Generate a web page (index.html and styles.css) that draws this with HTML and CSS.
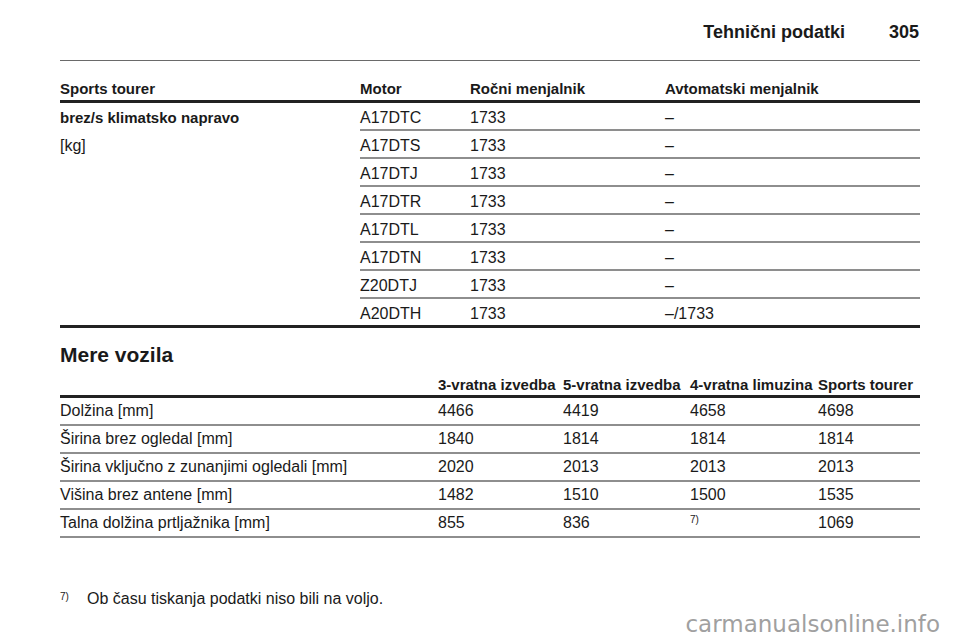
FILE: index.html
```html
<!DOCTYPE html>
<html lang="sl">
<head>
<meta charset="utf-8">
<title>Tehnični podatki 305</title>
<link rel="stylesheet" href="styles.css">
</head>
<body>
<div class="page">
  <header class="page-head">
    <span class="head-title">Tehnični podatki</span>
    <span class="head-num">305</span>
  </header>

  <div class="tbl-wrap">
    <table class="tbl tbl1">
      <colgroup>
        <col class="w300"><col class="w110"><col class="w195"><col class="w255">
      </colgroup>
      <thead>
        <tr><th>Sports tourer</th><th>Motor</th><th>Ročni menjalnik</th><th>Avtomatski menjalnik</th></tr>
      </thead>
      <tbody>
        <tr>
          <td class="lead" rowspan="8"><div class="lead-b">brez/s klimatsko napravo</div><div class="lead-u">[kg]</div></td>
          <td>A17DTC</td><td>1733</td><td>–</td>
        </tr>
        <tr><td>A17DTS</td><td>1733</td><td>–</td></tr>
        <tr><td>A17DTJ</td><td>1733</td><td>–</td></tr>
        <tr><td>A17DTR</td><td>1733</td><td>–</td></tr>
        <tr><td>A17DTL</td><td>1733</td><td>–</td></tr>
        <tr><td>A17DTN</td><td>1733</td><td>–</td></tr>
        <tr><td>Z20DTJ</td><td>1733</td><td>–</td></tr>
        <tr class="last"><td>A20DTH</td><td>1733</td><td>–/1733</td></tr>
      </tbody>
    </table>
  </div>

  <h2 class="sec-title">Mere vozila</h2>

  <table class="tbl tbl2">
    <colgroup>
      <col class="w378"><col class="w125"><col class="w127"><col class="w128"><col class="w102">
    </colgroup>
    <thead>
      <tr><th></th><th>3-vratna izvedba</th><th>5-vratna izvedba</th><th>4-vratna limuzina</th><th>Sports tourer</th></tr>
    </thead>
    <tbody>
      <tr><td>Dolžina [mm]</td><td>4466</td><td>4419</td><td>4658</td><td>4698</td></tr>
      <tr><td>Širina brez ogledal [mm]</td><td>1840</td><td>1814</td><td>1814</td><td>1814</td></tr>
      <tr><td>Širina vključno z zunanjimi ogledali [mm]</td><td>2020</td><td>2013</td><td>2013</td><td>2013</td></tr>
      <tr><td>Višina brez antene [mm]</td><td>1482</td><td>1510</td><td>1500</td><td>1535</td></tr>
      <tr><td>Talna dolžina prtljažnika [mm]</td><td>855</td><td>836</td><td><sup class="fn">7)</sup></td><td>1069</td></tr>
    </tbody>
  </table>

  <p class="footnote"><span class="fn-mark">7)</span><span>Ob času tiskanja podatki niso bili na voljo.</span></p>
</div>
<div class="watermark">carmanualsonline.info</div>
</body>
</html>
```
FILE: styles.css
```css
html, body {
  margin: 0;
  padding: 0;
  background: #ffffff;
}
body {
  font-family: "Liberation Sans", Arial, Helvetica, sans-serif;
  color: #1a1a1a;
  width: 960px;
  height: 642px;
  position: relative;
  overflow: hidden;
}
.page {
  padding: 0 40px 0 60px;
}
.page-head {
  display: flex;
  justify-content: flex-end;
  gap: 44px;
  padding: 21px 1px 17px 0;
  border-bottom: 1px solid #6a6a6a;
  font-weight: bold;
  font-size: 18px;
  line-height: 22px;
}
.tbl {
  width: 860px;
  table-layout: fixed;
  border-collapse: separate;
  border-spacing: 0;
}
.w300 { width: 300px; }
.w110 { width: 110px; }
.w195 { width: 195px; }
.w255 { width: 255px; }
.w378 { width: 378px; }
.w125 { width: 125px; }
.w127 { width: 127px; }
.w128 { width: 128px; }
.w102 { width: 102px; }

.tbl th {
  text-align: left;
  font-weight: bold;
  font-size: 15px;
  line-height: 18px;
  padding: 0;
  border-bottom: 3px solid #222222;
  white-space: nowrap;
}
.tbl td {
  font-size: 16px;
  line-height: 18px;
  padding: 0;
  vertical-align: top;
  white-space: nowrap;
  border-bottom: 2px solid #8e8e8e;
}

.tbl-wrap {
  margin-top: 19px;
  border-bottom: 3px solid #222222;
}
.tbl1 th { padding: 0 0 2px; }
.tbl1 td { padding: 6px 0 2px; }
.tbl1 tr.last td { border-bottom: none; padding-bottom: 2px; }
.tbl1 td.lead {
  border-bottom: none;
  padding: 6px 0 0;
}
.lead-b {
  font-weight: bold;
  font-size: 15px;
  line-height: 18px;
}
.lead-u {
  margin-top: 10px;
  line-height: 18px;
}

.sec-title {
  margin: 15px 0 0;
  font-size: 21px;
  line-height: 24px;
  font-weight: bold;
}

.tbl2 { margin-top: 9px; }
.tbl2 th { padding: 0 0 1px; }
.tbl2 td { padding: 4px 0 4px; }

.fn {
  font-size: 10px;
  line-height: 10px;
  vertical-align: top;
  position: relative;
  top: 1px;
}

.footnote {
  margin: 52px 0 0;
  display: flex;
  font-size: 16px;
  line-height: 18px;
}
.fn-mark {
  width: 27px;
  flex: none;
  font-size: 10px;
  line-height: 10px;
  padding-top: 2px;
}

.watermark {
  position: absolute;
  right: 20px;
  top: 610px;
  font-family: "DejaVu Sans", Verdana, sans-serif;
  font-size: 23px;
  line-height: 28px;
  color: #a0a0a0;
}
```
